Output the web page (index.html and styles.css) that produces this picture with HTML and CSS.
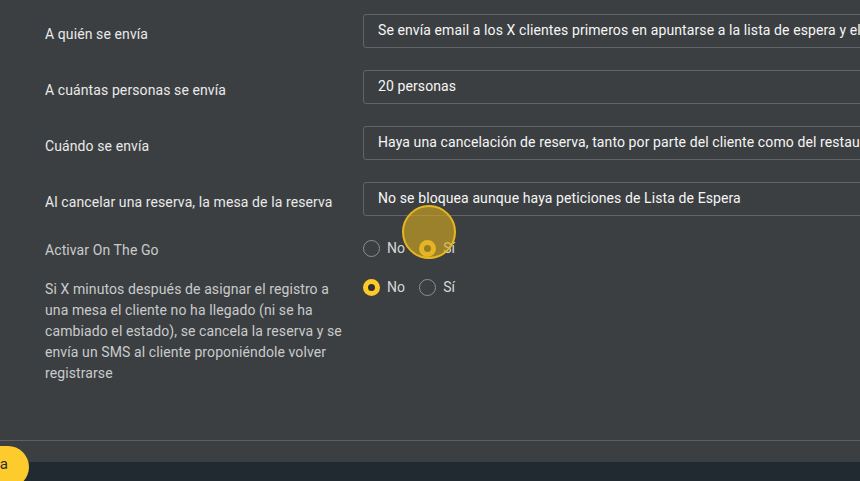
FILE: index.html
```html
<!DOCTYPE html>
<html lang="es">
<head>
<meta charset="utf-8">
<link rel="stylesheet" href="styles.css">
</head>
<body>
<div class="panel">
  <div class="form">
    <div class="row">
      <div class="label">A quién se envía</div>
      <div class="field"><div class="input">Se envía email a los X clientes primeros en apuntarse a la lista de espera y el resto de clientes</div></div>
    </div>
    <div class="row">
      <div class="label">A cuántas personas se envía</div>
      <div class="field"><div class="input">20 personas</div></div>
    </div>
    <div class="row">
      <div class="label">Cuándo se envía</div>
      <div class="field"><div class="input">Haya una cancelación de reserva, tanto por parte del cliente como del restaurante</div></div>
    </div>
    <div class="row">
      <div class="label">Al cancelar una reserva, la mesa de la reserva</div>
      <div class="field"><div class="input">No se bloquea aunque haya peticiones de Lista de Espera</div></div>
    </div>
    <div class="row radio-row first">
      <div class="label muted">Activar On The Go</div>
      <div class="radios">
        <span class="opt"><span class="radio"></span><span class="opt-text">No</span></span>
        <span class="opt"><span class="radio on"></span><span class="opt-text">Sí</span><span class="ripple"></span></span>
      </div>
    </div>
    <div class="row radio-row">
      <div class="label muted">Si X minutos después de asignar el registro a una mesa el cliente no ha llegado (ni se ha cambiado el estado), se cancela la reserva y se envía un SMS al cliente proponiéndole volver registrarse</div>
      <div class="radios">
        <span class="opt"><span class="radio on"></span><span class="opt-text">No</span></span>
        <span class="opt"><span class="radio"></span><span class="opt-text">Sí</span></span>
      </div>
    </div>
  </div>
  <div class="footer"></div>
</div>
<button class="fab">Guarda</button>
</body>
</html>
```
FILE: styles.css
```css
html, body {
  margin: 0;
  padding: 0;
}
body {
  width: 860px;
  height: 481px;
  overflow: hidden;
  background: #222a31;
  font-family: Roboto, "Liberation Sans", sans-serif;
  font-size: 14px;
  letter-spacing: 0.1px;
  position: relative;
}
.panel {
  background: #3c3f41;
  height: 462px;
  display: flex;
  flex-direction: column;
}
.form {
  padding: 14px 0 0 45px;
  flex: 1;
  display: flex;
  flex-direction: column;
}
.row {
  display: flex;
  align-items: flex-start;
  margin-bottom: 22px;
}
.label {
  width: 318px;
  flex: none;
  color: #e9eaea;
  line-height: 21px;
  padding-top: 10px;
}
.label.muted {
  color: #c9cbcc;
  width: 300px;
  margin-right: 18px;
  padding-top: 0;
}
.field {
  flex: none;
  width: 700px;
}
.input {
  box-sizing: border-box;
  height: 34px;
  border: 1px solid #626567;
  border-radius: 3px;
  padding: 0 14px;
  line-height: 30px;
  color: #f6f6f6;
  white-space: nowrap;
  overflow: hidden;
}
.radio-row.first {
  margin-top: 2px;
  margin-bottom: 18px;
}
.radios {
  display: flex;
  gap: 14px;
}
.opt {
  display: flex;
  align-items: center;
  gap: 7px;
  height: 16px;
  position: relative;
}
.radio {
  box-sizing: border-box;
  width: 17px;
  height: 17px;
  border-radius: 50%;
  border: 1px solid #8d9092;
}
.radio.on {
  border: 5px solid #fbc92a;
  background: #2e3032;
}
.opt-text {
  color: #d6d7d8;
  line-height: 16px;
}
.ripple {
  position: absolute;
  left: -17px;
  top: -35px;
  width: 54px;
  height: 54px;
  box-sizing: border-box;
  border-radius: 50%;
  border: 2px solid #e6b81e;
  background: rgba(214, 170, 30, 0.62);
}
.footer {
  height: 21px;
  border-top: 1px solid #5e6163;
}
.fab {
  position: absolute;
  left: -62px;
  top: 446px;
  width: 91px;
  height: 42px;
  border: none;
  border-radius: 21px;
  background: #fdcc2c;
  color: #2b2b2b;
  font-family: Roboto, "Liberation Sans", sans-serif;
  font-size: 15px;
  text-align: right;
  padding: 0 21px 6px 0;
}
```
